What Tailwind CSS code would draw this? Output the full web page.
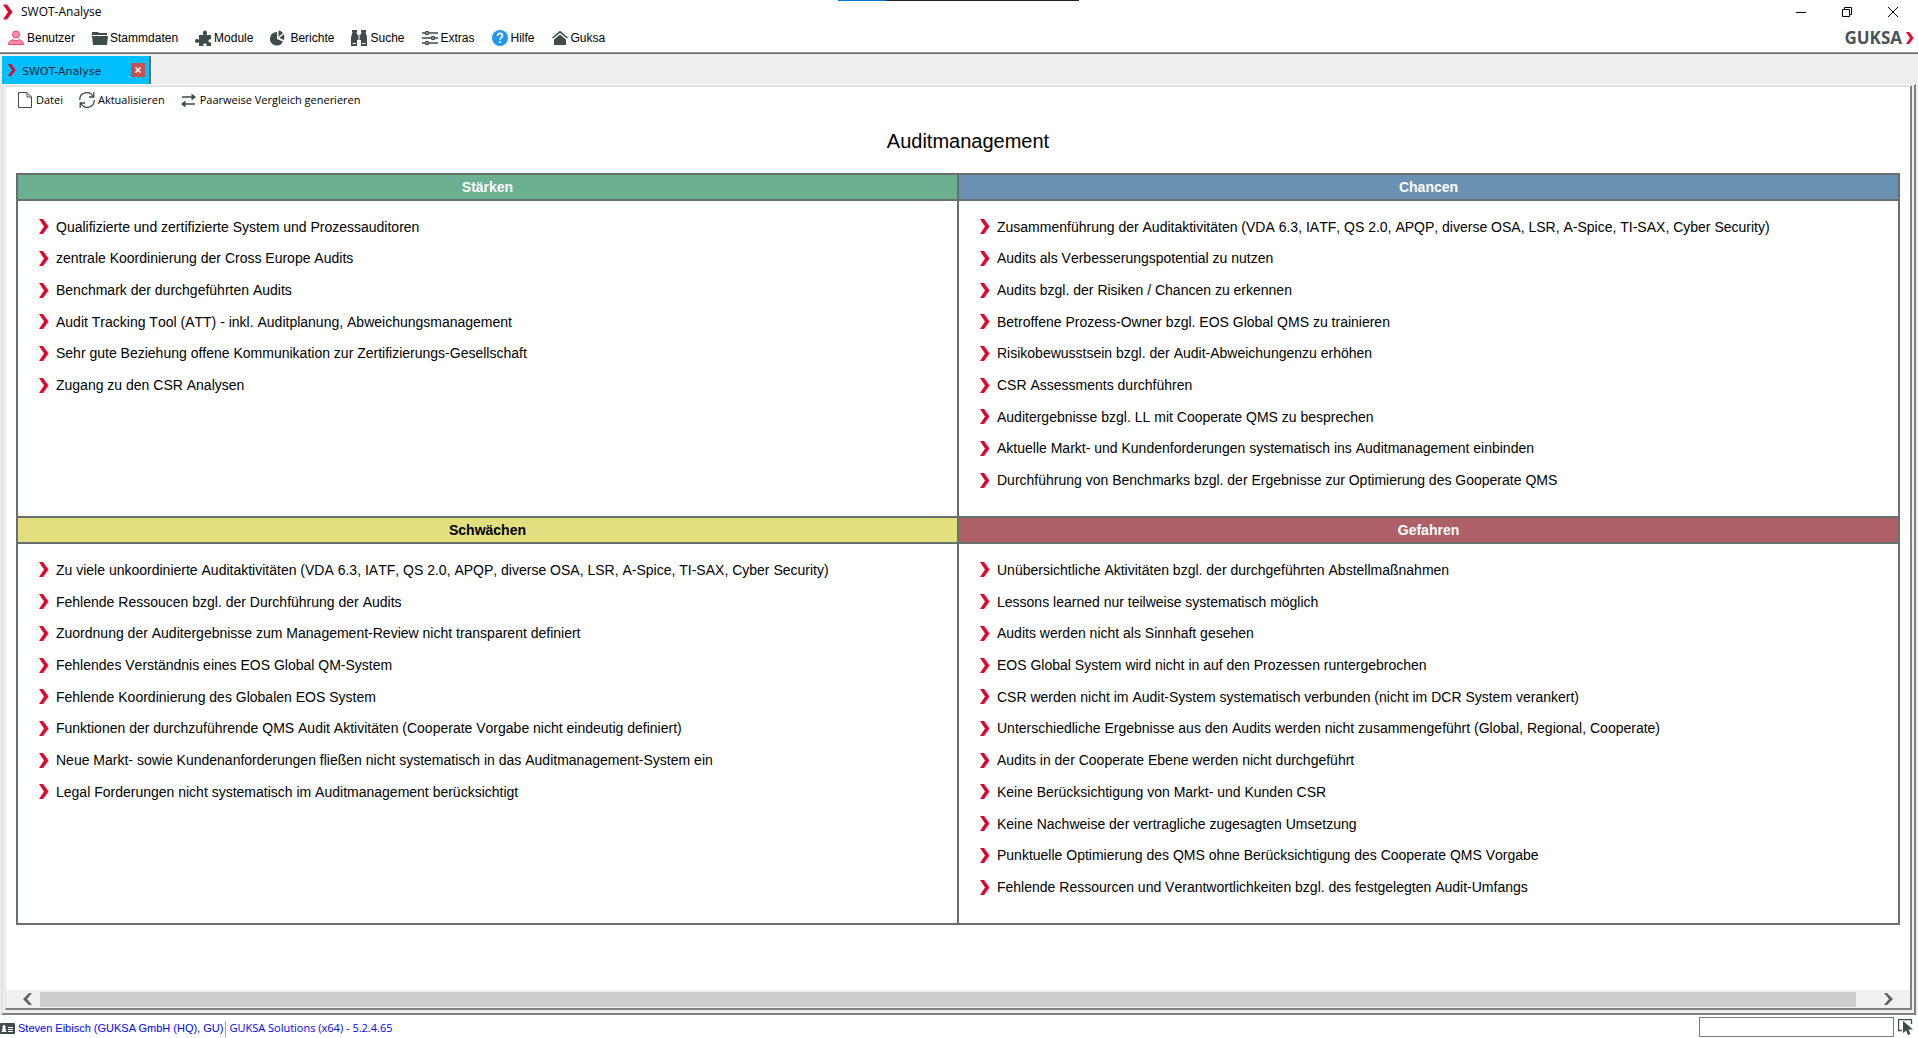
<!DOCTYPE html>
<html lang="de">
<head>
<meta charset="utf-8">
<title>SWOT-Analyse</title>
<script src="https://cdn.jsdelivr.net/npm/@tailwindcss/browser@4"></script>
</head>
<body class="relative flex min-h-screen flex-col bg-white font-['Liberation_Sans',Arial,sans-serif] text-xs text-black">
<svg class="hidden">
  <symbol id="chevron" viewBox="0 0 10 15"><path d="M0 0H4L9.500 7.500L4 15H0L5 7.500Z" fill="#e3062c"/></symbol>
</svg>

<div class="absolute top-0 left-[838px] flex h-px w-[241px] bg-[#222]"><span class="h-px w-12 bg-[#0078d7]"></span></div>

<header class="border-b border-[#696969]">
  <div class="flex h-6 items-center pl-[3px]">
    <svg class="h-4 w-[10px]"><use href="#chevron"/></svg>
    <h1 class="ml-2 font-['Open_Sans',sans-serif] text-xs">SWOT-Analyse</h1>
    <div class="ml-auto flex items-center gap-9 pr-5">
      <button aria-label="Minimieren"><svg class="size-[10px]" viewBox="0 0 10 10"><path d="M0 5.500H10" stroke="#000"/></svg></button>
      <button aria-label="Verkleinern"><svg class="size-[10px]" viewBox="0 0 10 10" fill="none" stroke="#000"><path d="M.5 2.500H7.500V9.500H.5ZM2.500 2.500V.5H9.500V7.500H7.500"/></svg></button>
      <button aria-label="Schließen"><svg class="size-[10px]" viewBox="0 0 10 10" stroke="#000"><path d="M0 0L10 10M10 0L0 10"/></svg></button>
    </div>
  </div>
  <nav class="flex h-[29px] items-center border-b border-[#a0a0a0] pl-2">
    <div class="flex gap-[17px]">
      <button class="flex items-center gap-[3px]"><svg class="size-4" viewBox="0 0 16 16"><g fill="#ff8fa8" stroke="#f4456c"><circle cx="8" cy="4.500" r="3.500"/><path d="M.5 14.500C.5 11.500 3 10 5 9.800C7 10.800 9 10.800 11 9.800C13 10 15.500 11.500 15.500 14.500Z"/></g></svg>Benutzer</button>
      <button class="flex items-center gap-[2px]"><svg class="size-4" viewBox="0 0 16 16"><path d="M0 2H6L7 3H15V5H0ZM0 6H16L15 15H1Z" fill="#3e4c4c"/></svg>Stammdaten</button>
      <button class="flex items-center gap-[3px]"><svg class="size-4" viewBox="0 0 16 16"><path d="M4 5H8.500C7.500 3.500 7.600 .5 10 .5S12.500 3.500 11.500 5H16V9.500C14 9 13.500 10 13.500 11S14.500 12.800 16 12.200V16H11.500C12 14 11 13.500 10 13.500S8 14 8.500 16H4V12C3 13.500 0 13.300 0 11S3 8.500 4 10Z" fill="#3e4c4c"/></svg>Module</button>
      <button class="flex items-center gap-[5px]"><svg class="h-4 w-[15px]" viewBox="0 0 14 16"><path d="M6.500 2A6.800 6.800 0 1 0 12.500 11.500L6.500 9Z" fill="#3e4c4c"/><path d="M8 .5V7L12.500 3Q11 .8 8 .5ZM9 8L13.200 4.200Q14.500 7 13.500 10Z" fill="#3e4c4c"/></svg>Berichte</button>
      <button class="flex items-center gap-[3px]"><svg class="size-4" viewBox="0 0 16 16"><path d="M1 0H6V2H5.500L6.500 5H9.500L10.500 2H10V0H15V2H14.500L16 7V16H10V10H6V16H0V7L1.500 2H1Z" fill="#3e4c4c"/><path d="M1.500 13.500H5M11 13.500H14.500M8 5V10" stroke="#fff"/></svg>Suche</button>
      <button class="flex items-center gap-[3px]"><svg class="size-4" viewBox="0 0 16 16" fill="none" stroke="#3e4c4c" stroke-width="1.500"><path d="M0 3H3.500M6.500 3H16M0 8H9.500M12.500 8H16M0 13H3.500M6.500 13H16"/><circle cx="5" cy="3" r="1.500"/><circle cx="11" cy="8" r="1.500"/><circle cx="5" cy="13" r="1.500"/></svg>Extras</button>
      <button class="flex items-center gap-[3px]"><svg class="size-4" viewBox="0 0 16 16"><circle cx="8" cy="8" r="8" fill="#2196f3"/><path d="M5.500 6C5.500 2.500 10.500 2.700 10.500 5.700C10.500 7.500 8 7.500 8 9.800" fill="none" stroke="#fff" stroke-width="1.700"/><circle cx="8" cy="12" r="1.100" fill="#fff"/></svg>Hilfe</button>
      <button class="flex items-center gap-[3px]"><svg class="size-4" viewBox="0 0 16 16"><path d="M.5 8L8 1.800L15.500 8" fill="none" stroke="#3e4c4c" stroke-width="1.500"/><path d="M8 4.500L14 9.500V15H2V9.500Z" fill="#3e4c4c"/></svg>Guksa</button>
    </div>
    <div class="ml-auto flex items-center gap-1 pr-1">
      <span class="font-['Open_Sans',sans-serif] text-[17px] leading-6 font-bold text-[#46535a]">GUKSA</span>
      <svg class="h-3 w-2"><use href="#chevron"/></svg>
    </div>
  </nav>
</header>

<div class="flex grow flex-col bg-[#eee] pr-[2px]">
  <div class="flex h-[30px] items-end px-[2px]">
    <div class="flex h-[28px] w-[149px] items-center border-r-2 border-[#696969] bg-[#00bfff] pr-1 pl-[6px]">
      <svg class="h-3 w-2"><use href="#chevron"/></svg>
      <span class="ml-[6px] pt-1 font-['DejaVu_Sans',sans-serif] text-[11px] text-[#10203a]">SWOT-Analyse</span>
      <button aria-label="Tab schließen" class="ml-auto flex size-[14px] items-center justify-center bg-[#c75050]"><svg class="size-[6px]" viewBox="0 0 6 6" stroke="#fff" stroke-width="1.500"><path d="M.5 .5L5.500 5.500M5.500 .5L.5 5.500"/></svg></button>
    </div>
  </div>
  <div class="ml-px flex grow flex-col border-t border-r-2 border-b-2 border-l-2 border-t-white border-r-[#808080] border-b-[#808080] border-l-[#e3e3e3] pr-[2px] pb-[3px] pl-[2px]">
    <main class="flex grow flex-col border-t-2 border-r-2 border-b-2 border-l border-t-[#e3e3e3] border-r-[#808080] border-b-[#808080] border-l-[#e3e3e3] bg-white">
      <div class="flex h-[26px] items-center gap-4 pl-3 font-['Open_Sans',sans-serif] text-[11px]">
        <button class="flex items-center gap-1"><svg class="h-4 w-[14px]" viewBox="0 0 14 16" fill="none" stroke="#3e4c4c"><path d="M.5 .5H9L13.500 5V15.500H.5ZM9 .5V5H13.500"/></svg>Datei</button>
        <button class="flex items-center gap-[3px]"><svg class="size-4" viewBox="0 0 16 16" fill="none" stroke="#3e4c4c" stroke-width="1.300"><path d="M.8 8A7 7 0 0 1 14 4.500M15.200 8A7 7 0 0 1 2 11.500M14.800 0V5H10M1.200 16V11H6"/></svg>Aktualisieren</button>
        <button class="flex items-center gap-1"><svg class="h-4 w-[15px]" viewBox="0 0 15 16" fill="none" stroke="#3e4c4c" stroke-width="1.600"><path d="M1 5H12M3 12H14"/><path d="M10.500 1.500L15 5L10.500 8.500ZM4.500 8.500L0 12L4.500 15.500Z" fill="#3e4c4c" stroke="none"/></svg>Paarweise Vergleich generieren</button>
      </div>
      <h2 class="mt-4 pl-5 text-center text-xl leading-6">Auditmanagement</h2>
      <div class="mt-5 px-[10px]">
        <table class="w-full table-fixed border-collapse text-sm [font-kerning:none]">
          <tr class="h-[26px] text-white">
            <th class="border-2 border-[#68706f] bg-[#6ab091]">Stärken</th>
            <th class="border-2 border-[#68706f] bg-[#6a91b2]">Chancen</th>
          </tr>
          <tr class="align-top">
            <td class="border-2 border-[#68706f] pt-[10px] pb-5 pl-[21px]"><ul class="grid min-h-[285px] grid-rows-9" data-items="Qualifizierte und zertifizierte System und Prozessauditoren|zentrale Koordinierung der Cross Europe Audits|Benchmark der durchgeführten Audits|Audit Tracking Tool (ATT) - inkl. Auditplanung, Abweichungsmanagement|Sehr gute Beziehung offene Kommunikation zur Zertifizierungs-Gesellschaft|Zugang zu den CSR Analysen"></ul></td>
            <td class="border-2 border-[#68706f] pt-[10px] pb-5 pl-[21px]"><ul class="grid min-h-[285px] grid-rows-9" data-items="Zusammenführung der Auditaktivitäten (VDA 6.3, IATF, QS 2.0, APQP, diverse OSA, LSR, A-Spice, TI-SAX, Cyber Security)|Audits als Verbesserungspotential zu nutzen|Audits bzgl. der Risiken / Chancen zu erkennen|Betroffene Prozess-Owner bzgl. EOS Global QMS zu trainieren|Risikobewusstsein bzgl. der Audit-Abweichungenzu erhöhen|CSR Assessments durchführen|Auditergebnisse bzgl. LL mit Cooperate QMS zu besprechen|Aktuelle Markt- und Kundenforderungen systematisch ins Auditmanagement einbinden|Durchführung von Benchmarks bzgl. der Ergebnisse zur Optimierung des Gooperate QMS"></ul></td>
          </tr>
          <tr class="h-[26px]">
            <th class="border-2 border-[#68706f] bg-[#e2df7e]">Schwächen</th>
            <th class="border-2 border-[#68706f] bg-[#ae6067] text-white">Gefahren</th>
          </tr>
          <tr class="align-top">
            <td class="border-2 border-[#68706f] pt-[10px] pb-5 pl-[21px]"><ul class="grid min-h-[349px] grid-rows-11" data-items="Zu viele unkoordinierte Auditaktivitäten (VDA 6.3, IATF, QS 2.0, APQP, diverse OSA, LSR, A-Spice, TI-SAX, Cyber Security)|Fehlende Ressoucen bzgl. der Durchführung der Audits|Zuordnung der Auditergebnisse zum Management-Review nicht transparent definiert|Fehlendes Verständnis eines EOS Global QM-System|Fehlende Koordinierung des Globalen EOS System|Funktionen der durchzuführende QMS Audit Aktivitäten (Cooperate Vorgabe nicht eindeutig definiert)|Neue Markt- sowie Kundenanforderungen fließen nicht systematisch in das Auditmanagement-System ein|Legal Forderungen nicht systematisch im Auditmanagement berücksichtigt"></ul></td>
            <td class="border-2 border-[#68706f] pt-[10px] pb-5 pl-[21px]"><ul class="grid min-h-[349px] grid-rows-11" data-items="Unübersichtliche Aktivitäten bzgl. der durchgeführten Abstellmaßnahmen|Lessons learned nur teilweise systematisch möglich|Audits werden nicht als Sinnhaft gesehen|EOS Global System wird nicht in auf den Prozessen runtergebrochen|CSR werden nicht im Audit-System systematisch verbunden (nicht im DCR System verankert)|Unterschiedliche Ergebnisse aus den Audits werden nicht zusammengeführt (Global, Regional, Cooperate)|Audits in der Cooperate Ebene werden nicht durchgeführt|Keine Berücksichtigung von Markt- und Kunden CSR|Keine Nachweise der vertragliche zugesagten Umsetzung|Punktuelle Optimierung des QMS ohne Berücksichtigung des Cooperate QMS Vorgabe|Fehlende Ressourcen und Verantwortlichkeiten bzgl. des festgelegten Audit-Umfangs"></ul></td>
          </tr>
        </table>
      </div>
      <div class="mt-auto flex h-[18px] items-center bg-[#f0f0f0] px-[17px]">
        <button aria-label="Nach links" class="mr-2"><svg class="h-3 w-[9px]" viewBox="0 0 9 12"><path d="M9 0H6L0 6L6 12H9L4 6Z" fill="#606060"/></svg></button>
        <div class="h-[15px] grow bg-[#cdcdcd]"></div>
        <button aria-label="Nach rechts" class="ml-7"><svg class="h-3 w-[9px]" viewBox="0 0 9 12"><path d="M0 0H3L9 6L3 12H0L5 6Z" fill="#606060"/></svg></button>
      </div>
    </main>
  </div>
</div>

<footer class="flex h-[23px] items-center text-[#0000ff]">
  <div class="flex items-center pt-1">
    <svg class="h-[11px] w-[15px]" viewBox="0 0 15 11"><rect width="15" height="11" rx="1" fill="#3e4c4c"/><circle cx="4" cy="3.500" r="1.500" fill="#fff"/><path d="M3 4H5L6.500 9H1.500ZM8 4H13V5H8ZM8 6H13V7H8ZM8 8H13V9H8Z" fill="#fff"/></svg>
    <span class="ml-[3px] text-[11px]">Steven Eibisch (GUKSA GmbH (HQ), GU)</span>
    <span class="ml-[2px] h-4 w-px bg-[#a0a0a0]"></span>
    <span class="ml-[3px] font-['Open_Sans',sans-serif] text-[11px]">GUKSA Solutions (x64) - 5.2.4.65</span>
  </div>
  <input aria-label="Suche" class="ml-auto h-5 w-[195px] border border-[#7a7a7a] bg-white px-1">
  <button aria-label="Auswählen" class="mr-1 ml-1"><svg class="size-4" viewBox="0 0 16 16"><path d="M4 11.500H.5V.5H13.500V5" fill="none" stroke="#3e4c4c" stroke-width="1.300"/><path d="M5 2V14L8 11.500L10 16L12.500 15L10.500 10.500H15Z" fill="#3e4c4c"/></svg></button>
</footer>

<script>
document.querySelectorAll('ul[data-items]').forEach(function (list) {
  list.dataset.items.split('|').forEach(function (text) {
    var item = document.createElement('li');
    item.className = 'flex items-center gap-[7px]';
    item.innerHTML = '<svg class="h-[15px] w-[10px] shrink-0"><use href="#chevron"/></svg>';
    item.append(text);
    list.append(item);
  });
});
</script>
</body>
</html>
